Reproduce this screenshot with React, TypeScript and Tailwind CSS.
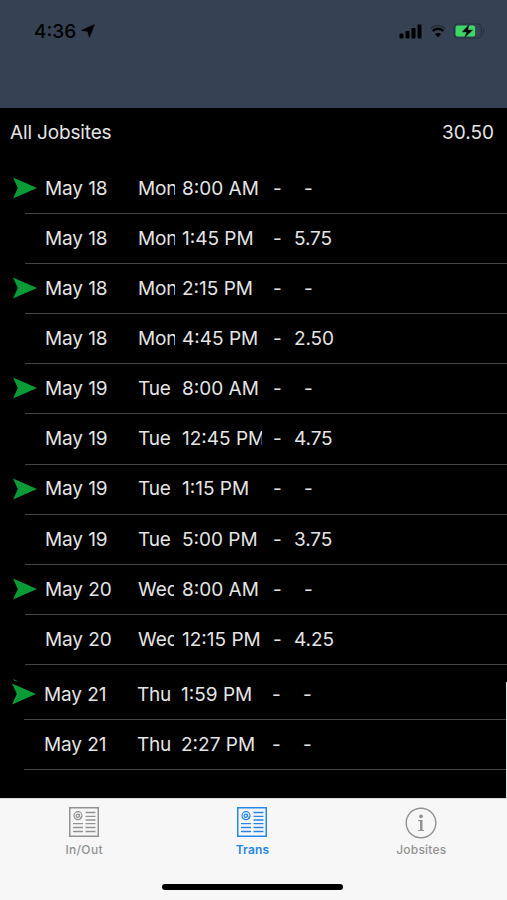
import { clsx } from "clsx";

interface Entry {
  date: string;
  day: string;
  time: string;
  hours: string;
  clockIn: boolean;
}

const entries: Entry[] = [
  { date: "May 18", day: "Mon", time: "8:00 AM", hours: "-", clockIn: true },
  { date: "May 18", day: "Mon", time: "1:45 PM", hours: "5.75", clockIn: false },
  { date: "May 18", day: "Mon", time: "2:15 PM", hours: "-", clockIn: true },
  { date: "May 18", day: "Mon", time: "4:45 PM", hours: "2.50", clockIn: false },
  { date: "May 19", day: "Tue", time: "8:00 AM", hours: "-", clockIn: true },
  { date: "May 19", day: "Tue", time: "12:45 PM", hours: "4.75", clockIn: false },
  { date: "May 19", day: "Tue", time: "1:15 PM", hours: "-", clockIn: true },
  { date: "May 19", day: "Tue", time: "5:00 PM", hours: "3.75", clockIn: false },
  { date: "May 20", day: "Wed", time: "8:00 AM", hours: "-", clockIn: true },
  { date: "May 20", day: "Wed", time: "12:15 PM", hours: "4.25", clockIn: false },
];

const latest: Entry[] = [
  { date: "May 21", day: "Thu", time: "1:59 PM", hours: "-", clockIn: true },
  { date: "May 21", day: "Thu", time: "2:27 PM", hours: "-", clockIn: false },
];

function StatusBar() {
  return (
    <div className="flex h-[62px] items-center justify-between pr-[21px] pl-[34px] text-black">
      <div className="flex items-center gap-[5px]">
        <span className="text-[19px] leading-none font-medium">4:36</span>
        <svg width="14" height="14" viewBox="0 0 14 14" fill="currentColor">
          <path d="M13.4.6 8.4 13.4 6.8 7.3.5 6.4Z" stroke="currentColor" strokeWidth="0.6" strokeLinejoin="round" />
        </svg>
      </div>
      <div className="flex items-center gap-[7px]">
        <svg width="24" height="15" viewBox="0 0 24 15" fill="currentColor">
          <rect x="0.5" y="9.5" width="4" height="5" rx="1" />
          <rect x="6.5" y="7" width="4" height="7.5" rx="1" />
          <rect x="12.5" y="4" width="4" height="10.5" rx="1" />
          <rect x="18.5" y="0.5" width="4" height="14" rx="1" />
        </svg>
        <svg width="16" height="14" viewBox="0 0 16 14" fill="none" stroke="currentColor">
          <path d="M.8 4.4C4.8.5 11.2.5 15.2 4.4" strokeWidth="1.4" opacity="0.3" />
          <path d="M2.6 7C5.6 4 10.4 4 13.4 7" strokeWidth="2.4" />
          <path d="M5 10.2C6.8 8.7 9.2 8.7 11 10.2L8 13.3Z" fill="currentColor" stroke="none" />
        </svg>
        <svg width="33" height="16" viewBox="0 0 33 16">
          <rect x="1" y="1" width="27.5" height="14" rx="4" fill="none" stroke="#24323f" strokeWidth="1.1" />
          <path d="M30.2 5.6C31.8 6.2 31.8 9.8 30.2 10.4Z" fill="#24323f" />
          <rect x="2.6" y="2.5" width="19.5" height="11" rx="2" fill="#3ed766" />
          <path d="M16.2 1.5 9 9h4.7l-2.2 5.8L19.6 7h-4.8Z" fill="#000" stroke="#1e3a2e" strokeWidth="0.5" />
        </svg>
      </div>
    </div>
  );
}

function EntryRow({ entry, tall }: { entry: Entry; tall?: boolean }) {
  return (
    <div className={clsx("flex w-full flex-col justify-end", tall ? "h-[55px]" : "h-[50.1px]")}>
      <div className="flex h-[49px] items-center">
        <div className="w-[45px] shrink-0 pb-px pl-[13px]">
          {entry.clockIn && (
            <svg width="24" height="22" viewBox="0 0 24 22" fill="#0a9a36">
              <path d="M0 .6 24 11 0 21.4 4.8 11Z" />
            </svg>
          )}
        </div>
        <span className="w-[93px] shrink-0 pt-px">{entry.date}</span>
        <div className="w-[44px] shrink-0 pt-px">
          <div
            className={clsx(
              "overflow-hidden",
              entry.day === "Wed" ? "w-[36px]" : "w-[37px] tracking-[-0.2px]"
            )}
          >
            {entry.day}
          </div>
        </div>
        <span className="w-[80px] shrink-0 overflow-hidden pt-px tracking-normal">{entry.time}</span>
        <span className="ml-[11px] w-[21px] shrink-0 pt-px">-</span>
        <span className={clsx("shrink-0 pt-px", entry.hours === "-" && "pl-[10px]")}>{entry.hours}</span>
      </div>
      <div className="ml-[25px] h-px shrink-0 bg-[#444446]" />
    </div>
  );
}

function CardIcon() {
  return (
    <svg width="30" height="30" viewBox="0 0 30 30" fill="none" stroke="currentColor">
      <rect x="0.75" y="0.75" width="28.5" height="28.5" strokeWidth="1.5" />
      <circle cx="9" cy="8.7" r="4" strokeWidth="1.2" />
      <circle cx="8.7" cy="8.7" r="1.6" strokeWidth="1.2" />
      <path d="M10.6 6.8v2.6c0 1.2 1.9 1.2 2.2 0" strokeWidth="1" />
      <path
        d="M16.5 5.5h10M16.5 9.3h10M16.5 13h10M4 16.7h10M16.5 16.7h10M4 20.5h10M16.5 20.5h10M4 24.5h10M16.5 24.5h10"
        strokeWidth="1.3"
      />
    </svg>
  );
}

function InfoIcon() {
  return (
    <svg width="32" height="32" viewBox="0 0 32 32" fill="none" stroke="currentColor">
      <circle cx="16" cy="16" r="14.8" strokeWidth="1.4" />
      <circle cx="16" cy="9.3" r="1.9" fill="currentColor" stroke="none" />
      <path d="M13.2 12.9h4.3v10h1.6V24h-6v-1.1H15v-8.7h-1.8Z" fill="currentColor" stroke="none" />
    </svg>
  );
}

function TabBar() {
  return (
    <div className="flex h-[102px] flex-col items-center justify-between border-t border-[#d5d5d5] bg-[#f7f7f7] pr-[2px]">
      <div className="grid w-full grid-cols-3 text-[#929292]">
        <div className="flex flex-col items-center pt-[8px]">
          <CardIcon />
          <span className="mt-[5px] text-[12px] leading-4 font-medium tracking-[0.35px]">In/Out</span>
        </div>
        <div className="flex flex-col items-center pt-[8px] text-[#2586e8]">
          <CardIcon />
          <span className="mt-[5px] text-[12px] leading-4 font-semibold tracking-[0.2px]">Trans</span>
        </div>
        <div className="flex flex-col items-center pt-[8px] pl-px">
          <InfoIcon />
          <span className="mt-[3px] text-[12px] leading-4 font-medium tracking-[0.2px]">Jobsites</span>
        </div>
      </div>
      <div className="mb-[10px] h-[6px] w-[181px] rounded-full bg-black" />
    </div>
  );
}

export default function App() {
  return (
    <div className="relative flex h-[900px] w-[507px] flex-col overflow-hidden bg-black font-['Inter',sans-serif] text-[19px] whitespace-nowrap text-[#e4e4e4]">
      <header className="h-[108px] shrink-0 bg-[#344254]">
        <StatusBar />
      </header>

      <main className="flex-1">
        <div className="flex h-[56px] items-start justify-between pt-[11px] pr-[13px] pl-[10px]">
          <span className="tracking-[-0.15px]">All Jobsites</span>
          <span>30.50</span>
        </div>
        <div className="tracking-[-0.1px]">
          {entries.map((entry, i) => (
            <EntryRow key={i} entry={entry} />
          ))}
        </div>
        <div className="-ml-px w-[508px] tracking-[-0.1px]">
          {latest.map((entry, i) => (
            <EntryRow key={i} entry={entry} tall={i === 0} />
          ))}
        </div>
      </main>

      <TabBar />
      <div className="absolute top-[682px] right-0 h-[116px] w-px bg-[#e8e8e8]" />
      <svg className="absolute top-[679px] left-[13px]" width="6" height="3" viewBox="0 0 6 3">
        <path d="M0 0 6 2.6 1.5 2Z" fill="#0a7a2c" />
      </svg>
    </div>
  );
}
